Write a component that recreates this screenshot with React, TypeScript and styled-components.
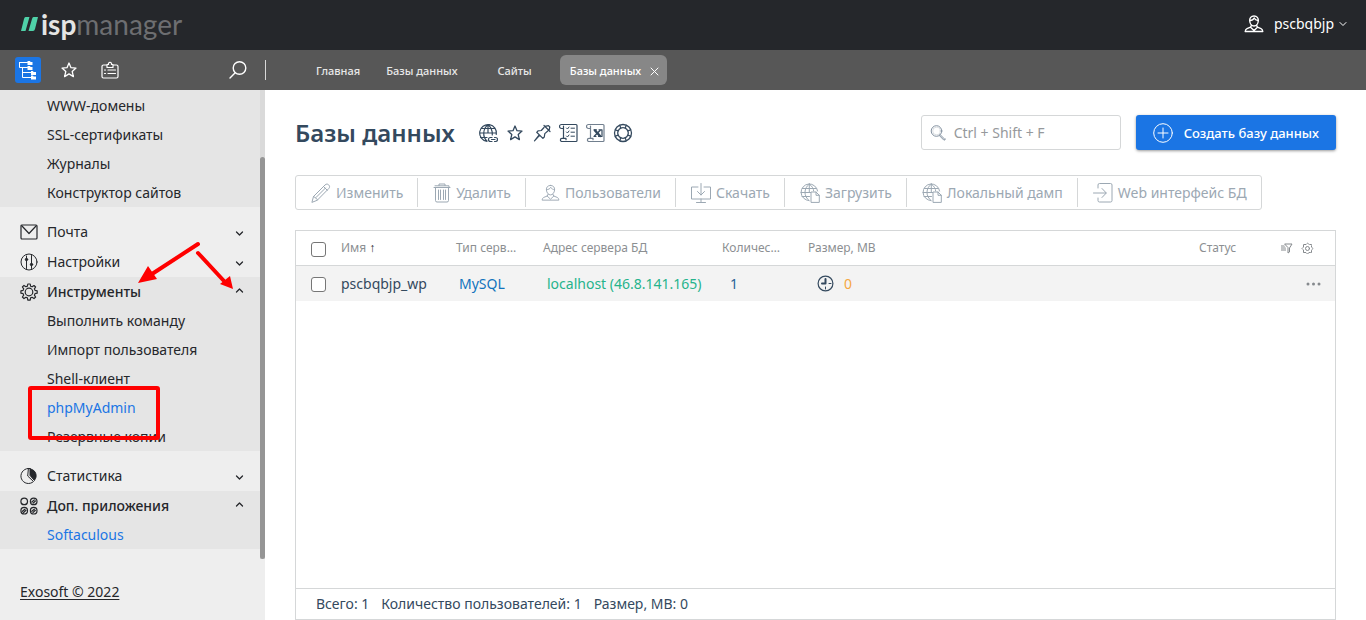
import React from "react";
import styled, { createGlobalStyle, css } from "styled-components";

const GlobalStyle = createGlobalStyle`
  *, *::before, *::after { box-sizing: border-box; }
  body {
    margin: 0;
    background: #ffffff;
    color: #25272b;
    font-family: "Noto Sans", "Open Sans", sans-serif;
    font-size: 14px;
    line-height: 20px;
  }
  button, input { font: inherit; }
  button { border: 0; padding: 0; background: none; color: inherit; cursor: pointer; }
  a { color: inherit; text-decoration: none; }
  svg { display: block; flex: none; }
`;

const Page = styled.div`
  position: relative;
  display: flex;
  flex-direction: column;
  min-height: 100vh;
`;

const TopBar = styled.header`
  display: flex;
  align-items: center;
  justify-content: space-between;
  height: 50px;
  padding: 0 19px 2px 21px;
  background: #25272b;
`;

const Logo = styled.a`
  display: flex;
  align-items: center;
  gap: 3px;
  font-family: Lato, sans-serif;
  font-size: 28px;
  line-height: 44px;
  color: #6d6e71;
  b { color: #e4e4e4; font-weight: 700; }
`;

const UserButton = styled.button`
  display: flex;
  align-items: center;
  color: #ffffff;
  svg:first-child { margin-right: 10px; }
  svg:last-child { margin-left: 5px; }
`;

const NavBar = styled.div`
  display: flex;
  align-items: center;
  height: 40px;
  background: #575757;
  color: #ffffff;
`;

const Modes = styled.div`
  display: flex;
  align-items: center;
  gap: 15px;
  width: 266px;
  height: 20px;
  padding: 0 14px 0 15px;
  border-right: 1px solid #d8d8d8;
  button:last-child { margin-left: auto; }
`;

const ModeButton = styled.button<{ $active?: boolean }>`
  display: grid;
  place-items: center;
  width: 26px;
  height: 26px;
  border-radius: 3px;
  background: ${(p) => (p.$active ? "#1b75e4" : "transparent")};
`;

const Tabs = styled.nav`
  display: flex;
  align-items: center;
  padding-left: 38px;
  font-size: 11px;
  font-weight: 500;
`;

const Tab = styled.a<{ $home?: boolean; $active?: boolean }>`
  display: flex;
  align-items: center;
  height: 30px;
  padding: 2px ${(p) => (p.$home ? 14 : 28)}px 0 12px;
  color: #e8e8e8;
  ${(p) =>
    p.$active &&
    css`
      gap: 9px;
      padding: 2px 8px 0 10px;
      border-radius: 6px;
      background: #878787;
      color: #ffffff;
    `}
`;

const Body = styled.div`
  display: flex;
  flex: 1;
`;

const Sidebar = styled.aside`
  display: flex;
  flex-direction: column;
  flex: none;
  width: 265px;
  background: #eeeeee;
`;

const MenuArea = styled.div`
  display: flex;
`;

const Menu = styled.nav`
  flex: 1;
  padding-bottom: 10px;
`;

const Rail = styled.div`
  display: flex;
  width: 5px;
  padding-top: 67px;
  background: #dadada;
`;

const Thumb = styled.div`
  flex: 1;
  border-radius: 3px;
  background: #959595;
`;

const Group = styled.section<{ $open?: boolean; $gap?: boolean }>`
  padding-top: ${(p) => (p.$gap ? 10 : 0)}px;
  background-clip: content-box;
  background-color: ${(p) => (p.$open ? "#e5e5e5" : "transparent")};
  &:first-child { padding-top: 1px; background-clip: border-box; }
`;

const GroupHead = styled.button<{ $open?: boolean }>`
  display: flex;
  align-items: center;
  width: 100%;
  height: ${(p) => (p.$open ? 29 : 30)}px;
  padding: 0 15px 0 20px;
  font-weight: ${(p) => (p.$open ? 500 : 400)};
  span { flex: 1; padding-left: 9px; text-align: left; }
`;

const SubList = styled.ul`
  margin: 0;
  padding: 0;
  list-style: none;
`;

const SubLink = styled.a<{ $blue?: boolean }>`
  display: block;
  padding-left: 47px;
  line-height: 29px;
  color: ${(p) => (p.$blue ? "#1b75e4" : "inherit")};
`;

const Copyright = styled.a`
  align-self: flex-start;
  margin: 23px 20px 18px;
  text-decoration: underline;
  text-underline-offset: 2px;
`;

const Main = styled.main`
  display: flex;
  flex: 1;
  flex-direction: column;
  min-width: 0;
  padding: 25px 30px 0;
  color: #34495e;
`;

const TitleRow = styled.div`
  display: flex;
  align-items: center;
  height: 35px;
`;

const Title = styled.h1`
  margin: 0;
  font-size: 24px;
  font-weight: 600;
  line-height: 35px;
`;

const TitleIcons = styled.div`
  display: flex;
  align-items: center;
  gap: 7px;
  margin-left: 23px;
`;

const SearchBox = styled.label`
  display: flex;
  align-items: center;
  gap: 8px;
  width: 200px;
  height: 35px;
  margin-left: auto;
  padding: 0 8px;
  border: 1px solid #d5d7d8;
  border-radius: 3px;
  color: #8391a0;
  input {
    flex: 1;
    min-width: 0;
    padding: 0;
    border: 0;
    outline: 0;
    background: none;
  }
  input::placeholder { color: #96999c; opacity: 1; }
`;

const CreateButton = styled.button`
  display: flex;
  align-items: center;
  gap: 11px;
  height: 35px;
  margin-left: 15px;
  padding: 0 17px;
  border-radius: 3px;
  background: #1b75e4;
  box-shadow: 0 1px 3px rgba(0, 0, 0, 0.4);
  color: #ffffff;
  font-size: 13px;
  font-weight: 500;
`;

const Toolbar = styled.div`
  display: flex;
  align-items: center;
  align-self: flex-start;
  height: 35px;
  margin-top: 25px;
  border: 1px solid #d5d7d8;
  border-radius: 3px;
`;

const ToolButton = styled.button`
  display: flex;
  align-items: center;
  gap: 5px;
  height: 29px;
  padding: 0 14px 0 15px;
  color: #9ca8b3;
  white-space: nowrap;
  & + & { border-left: 1px solid #d5d7d8; }
`;

const Panel = styled.section`
  display: flex;
  flex: 1;
  flex-direction: column;
  margin-top: 20px;
  border: 1px solid #d5d7d8;
`;

const PanelBody = styled.div`
  flex: 1;
`;

const Table = styled.table`
  width: 100%;
  table-layout: fixed;
  border-collapse: separate;
  border-spacing: 0;
  text-align: left;
  th, td { height: 35px; padding: 0; white-space: nowrap; }
  th {
    border-bottom: 1px solid #d5d7d8;
    color: #8c8f92;
    font-size: 12px;
    font-weight: 400;
  }
  td { background: #f3f3f3; }
`;

const Col = styled.col<{ $w?: number }>`
  width: ${(p) => (p.$w ? `${p.$w}px` : "auto")};
`;

const SortMark = styled.span`
  padding-left: 3px;
  color: #25272b;
`;

const Check = styled.input`
  display: block;
  appearance: none;
  width: 15px;
  height: 15px;
  margin: 2px 0 0 15px;
  border: 1px solid #767676;
  border-radius: 3px;
  background: #ffffff;
`;

const Value = styled.span<{ $indent?: number; $color?: string }>`
  display: flex;
  align-items: center;
  gap: 10px;
  padding-left: ${(p) => p.$indent ?? 0}px;
  color: ${(p) => p.$color ?? "inherit"};
`;

const EndCell = styled.div<{ $pad: number }>`
  display: flex;
  align-items: center;
  justify-content: flex-end;
  gap: 8px;
  padding-right: ${(p) => p.$pad}px;
  color: #85898d;
`;

const Totals = styled.footer`
  display: flex;
  align-items: center;
  gap: 12px;
  height: 31px;
  padding: 0 20px;
  border-top: 1px solid #d5d7d8;
`;

const Marks = styled.svg`
  position: absolute;
  top: 0;
  left: 0;
  pointer-events: none;
`;

type IconProps = { w?: number; h?: number; box?: string; sw?: number; children: React.ReactNode };
const Icon = ({ w = 20, h = w, box = `0 0 ${w} ${h}`, sw = 1, children }: IconProps) => (
  <svg width={w} height={h} viewBox={box} fill="none" stroke="currentColor" strokeWidth={sw} strokeLinecap="round" strokeLinejoin="round" aria-hidden="true">
    {children}
  </svg>
);

const Star = () => (
  <Icon box="-1 -1 20 20" sw={1.3}>
    <path d="M9 2 11 6.7 16 7.1 12.2 10.5 13.4 15.6 9 12.9 4.6 15.6 5.8 10.5 2 7.1 7 6.7Z" />
  </Icon>
);

const Person = ({ sw = 1 }: { sw?: number }) => (
  <Icon sw={sw}>
    <path d="M10 2C7 2 5.500 4 5.700 6.700 5.900 9.800 7.800 12 10 12s4.100-2.200 4.300-5.300C14.500 4 13 2 10 2Z" />
    <path d="M5.800 6.500C8 6.500 9.600 5.400 10.200 4c.7 1.500 2.300 2.300 4 2.500M7.500 11.300 6.500 13.200 3 14.600c-1 .4-1.600 1.300-1.800 2.900h17.600c-.2-1.600-.8-2.500-1.800-2.900l-3.500-1.400-1-1.900M6.500 13.200 10 16.500l3.500-3.300" />
  </Icon>
);

const GlobeFile = () => (
  <Icon>
    <path d="M9 17.6A8.300 8.300 0 1 1 17.600 8M2.300 5.500h14M1 9.500h10M2 13.500h7.500M9.300 1C3.500 5.500 3.500 13 9 17.500M9.300 1c3 2.300 4.200 4.700 4.400 7M9.300 1v8.500" />
    <path fill="#fff" d="M11 19V9h5l3.300 3.300V19ZM16 9v3.300h3.300" />
  </Icon>
);

const GlobeLink = () => (
  <Icon sw={1.2}>
    <path d="M9 18.300A8.400 8.400 0 1 1 18.300 11.500M3 5.500h14M1.600 10h16.800M2.500 14.500h6.500M10 1.600C4.500 6 4.500 14 9 18M10 1.600c3.500 3 4.600 6.500 4.300 10.400M10 1.600V10" />
    <path d="M14 14.500h-1.500a2 2 0 0 0 0 4H14M16.500 14.500H17.500a2 2 0 0 1 0 4H16.500M13.500 16.500h3.500" />
  </Icon>
);

const Pin = () => (
  <Icon sw={1.2}>
    <path d="m12 2.500 6 6M12.800 3.300l3.700-.6 1.300 1.300-.8 3.500M12 4.500 9.300 7.500 6 7.800 4.700 9.300l6.200 6.100 1.400-1.400.5-3.400 3-2.600M7.600 12.400 2.500 17.800M7.200 12 2.500 17.800" />
  </Icon>
);

const ScrollList = () => (
  <Icon sw={1.2}>
    <path d="M4.500 5.500h-2a1.800 1.800 0 0 1 0-4H17a1 1 0 0 1 1 1v15a1 1 0 0 1-1 1H3a1.500 1.500 0 0 1 0-3.200h4v1.400M4.500 3v12" />
    <path strokeWidth="1" d="m7.500 5 1 1 1.500-2M12 5.200h3.500M7.500 9l1 1L10 8M12 9.200h3.500M7.500 13l1 1 1.500-2M12 13.200h3.500" />
  </Icon>
);

const ScrollExcel = () => (
  <Icon sw={1.2}>
    <path opacity=".7" d="M4.500 5.500h-2a1.800 1.800 0 0 1 0-4H17a1 1 0 0 1 1 1v15a1 1 0 0 1-1 1H3a1.500 1.500 0 0 1 0-3.200h4v1.400M4.500 3v12" />
    <path strokeWidth="2.500" d="m9 7.500 5 5.500" />
    <path strokeWidth="1.500" d="m14 7.500-5.500 5.500" />
    <path d="M8 6.800h2.500M12.500 13.500H16V6.800h-3M8 13.500h2" />
  </Icon>
);

const LifeRing = () => (
  <Icon sw={1.3}>
    <circle cx="10" cy="10" r="8.500" />
    <circle cx="10" cy="10" r="5.300" />
    <path d="M6.800 2.400 7.800 5.300M2.400 6.800l2.900 1M13.200 2.400l-1 2.900M17.600 6.800l-2.900 1M6.800 17.600l1-2.900M2.400 13.200l2.900-1M13.200 17.600l-1-2.900M17.600 13.200l-2.900-1" />
  </Icon>
);

const Gear = ({ size = 17 }: { size?: number }) => (
  <Icon w={size} box="0 0 18 18" sw={1.2}>
    <path d="M7.800 1h2.400l.4 2.200 1.500.6 1.900-1.300L15.600 4l-1.200 1.900.6 1.500 2.200.4v2.400l-2.200.4-.6 1.500 1.200 1.900-1.600 1.600-1.900-1.300-1.500.6-.4 2.200H7.800l-.4-2.200-1.500-.6L4 15.600 2.400 14l1.300-1.900-.6-1.500-2.200-.4V7.800l2.200-.4.6-1.500L2.400 4 4 2.400l1.900 1.300 1.500-.6Z" />
    <circle cx="9" cy="9" r="3.800" />
  </Icon>
);

const TinyGear = () => (
  <Icon w={13}>
    <path d="M6.500 1 8 2.500h2.500V5L12 6.500 10.500 8v2.500H8L6.500 12 5 10.500H2.500V8L1 6.500 2.500 5V2.500H5Z" strokeDasharray="2 1" />
    <circle cx="6.500" cy="6.500" r="2" />
  </Icon>
);

const Chevron = ({ up }: { up?: boolean }) => (
  <Icon w={11} h={10} sw={1.3}><path d={up ? "M2.500 5 5.500 2l3 3" : "m2.500 5 3 3 3-3"} /></Icon>
);

const groupIcons: Record<string, React.ReactNode> = {
  mail: <Icon w={18} sw={1.2}><rect x="1" y="2" width="16" height="14" rx="1" /><path d="m2 3 7 7.500L16 3" /></Icon>,
  settings: (
    <Icon w={18}>
      <circle cx="9" cy="9" r="8" />
      <path d="M6.500 3v12.500M11.500 2.500v13" />
      <circle cx="6.500" cy="6.500" r="1.200" fill="currentColor" />
      <circle cx="11.500" cy="11.500" r="1.200" fill="currentColor" />
    </Icon>
  ),
  tools: <Gear size={18} />,
  stats: (
    <Icon w={18}>
      <path d="M8 1.500a7.500 7.500 0 1 0 5.500 13L8 9.300Z" />
      <path d="M8 1.500h2V8.500l4.500 5" />
      <path fill="currentColor" d="M10.500 2V8.300l4 4.700C17.500 10 16.500 3 10.500 2Z" />
    </Icon>
  ),
  apps: (
    <Icon w={18} sw={1.2}>
      <circle cx="4.200" cy="4.400" r="3.300" /><circle cx="13.700" cy="4.400" r="3.300" />
      <circle cx="4.200" cy="13.700" r="3.300" /><circle cx="13.700" cy="13.700" r="3.300" />
      <path d="m11.800 5 2.500-2.100M13 6.200 15.400 4M2.400 14.300l2.500-2.100M3.600 15.500 6 13.300M11.800 14.300l2.500-2.100M13 15.500l2.400-2.200" />
    </Icon>
  ),
};

type GroupData = { icon?: string; label?: string; open?: boolean; gap?: boolean; items?: { label: string; blue?: boolean }[] };
const groups: GroupData[] = [
  { open: true, items: [{ label: "WWW-домены" }, { label: "SSL-сертификаты" }, { label: "Журналы" }, { label: "Конструктор сайтов" }] },
  { icon: "mail", label: "Почта", gap: true },
  { icon: "settings", label: "Настройки" },
  {
    icon: "tools", label: "Инструменты", open: true,
    items: [{ label: "Выполнить команду" }, { label: "Импорт пользователя" }, { label: "Shell-клиент" }, { label: "phpMyAdmin", blue: true }, { label: "Резервные копии" }],
  },
  { icon: "stats", label: "Статистика", gap: true },
  { icon: "apps", label: "Доп. приложения", open: true, items: [{ label: "Softaculous", blue: true }] },
];

const tools: { label: string; icon: React.ReactNode }[] = [
  { label: "Изменить", icon: <Icon><path d="m1 19 1.500-5.500L14 2c1.300-1.200 2.500-1.200 3.600-.2 1.200 1.200 1.300 2.500.2 3.700L6.500 17Zm1.500-5.500c1 0 1.300.5 1.300 1.200 1 0 1.300.5 1.400 1.100.8 0 1.200.5 1.300 1.200M5 14.500 14.500 5M12.500 3.500l3.800 3.800" /></Icon> },
  { label: "Удалить", icon: <Icon w={18} h={20}><path d="M1 4.500h16M2 2.800h14v1.700M6 2.500V1h6v1.500M2.500 4.500v13a1.500 1.500 0 0 0 1.500 1.500h10a1.500 1.500 0 0 0 1.500-1.500v-13M5.500 7v9.500M7.500 7v9.500M10.500 7v9.500M12.500 7v9.500" /></Icon> },
  { label: "Пользователи", icon: <Icon w={19} h={20} box="0 0 20 20"><path d="M10 2C7 2 5.500 4 5.700 6.700 5.900 9.800 7.800 12 10 12s4.100-2.200 4.300-5.300C14.500 4 13 2 10 2ZM5.800 6.500C8 6.500 9.600 5.400 10.200 4c.7 1.500 2.300 2.300 4 2.500M7.500 11.300 6.500 13.200 3 14.600c-1 .4-1.600 1.300-1.800 2.900h17.600c-.2-1.600-.8-2.500-1.800-2.900l-3.500-1.400-1-1.900M6.500 13.200 10 16.500l3.500-3.300" /></Icon> },
  { label: "Скачать", icon: <Icon><path d="M7 4H.500v12h19V4H13M10 .500V12M6.500 8.500 10 12l3.500-3.500M10 16v3M5.500 19.500h9" /></Icon> },
  { label: "Загрузить", icon: <GlobeFile /> },
  { label: "Локальный дамп", icon: <GlobeFile /> },
  { label: "Web интерфейс БД", icon: <Icon><path d="M5 5V2A1.500 1.500 0 0 1 6.500 .500h11A1.500 1.500 0 0 1 19 2v15.500a1.500 1.500 0 0 1-1.500 1.500h-11A1.500 1.500 0 0 1 5 17.500V15M.500 10H13M9 5.500 13.300 10 9 14.500" /></Icon> },
];

const App = () => (
  <>
    <GlobalStyle />
    <Page>
      <TopBar>
        <Logo href="#">
          <svg width="17" height="14" viewBox="0 0 17 14" fill="#4fd1a8" aria-hidden="true">
            <path d="M4.500 0H8.500L4.500 14H0L3 2Q3.500 0 4.500 0ZM12.500 0H17L14 12Q13.500 14 12 14H7.500L11 2Q11.500 0 12.500 0Z" />
          </svg>
          <span><b>isp</b>manager</span>
        </Logo>
        <UserButton>
          <Person sw={1.4} />
          pscbqbjp
          <Icon w={8} h={8}><path d="m1 2.500 3 3 3-3" /></Icon>
        </UserButton>
      </TopBar>

      <NavBar>
        <Modes>
          <ModeButton $active aria-label="Меню">
            <Icon>
              <path d="M1.500 2.500h8M1.500 2.500v5h8M4.500 7.500v10H13M4.500 12.500H13" />
              <g fill="currentColor" stroke="none">
                <path d="M9.500 1h2.500l.5 1H14.500v3h-5ZM9.500 6h2.500l.5 1H14.500v3h-5ZM13 11h2l.5 1H18v3h-5ZM13 15.500h2l.5 1H18v3h-5Z" />
              </g>
            </Icon>
          </ModeButton>
          <ModeButton aria-label="Избранное"><Star /></ModeButton>
          <ModeButton aria-label="Карточка">
            <Icon w={18} sw={1.2}>
              <path d="M6 4H2.500A1.500 1.500 0 0 0 1 5.500v10A1.500 1.500 0 0 0 2.500 17h13a1.500 1.500 0 0 0 1.500-1.500v-10A1.500 1.500 0 0 0 15.500 4H12M6 6.500V3.500h1.500a1.600 1.600 0 1 1 3 0H12v3ZM3.500 9h1M3.500 12.500h1M7 9h7.500M7 12.500h7.500" />
            </Icon>
          </ModeButton>
          <ModeButton aria-label="Поиск">
            <Icon sw={1.4}><circle cx="11.500" cy="8" r="6.300" /><path d="M7.200 12.700 2 18" /></Icon>
          </ModeButton>
        </Modes>
        <Tabs>
          <Tab href="#" $home>Главная</Tab>
          <Tab href="#">Базы данных</Tab>
          <Tab href="#">Сайты</Tab>
          <Tab href="#" $active>
            Базы данных
            <Icon w={9}><path d="m1 1 7 7M8 1 1 8" /></Icon>
          </Tab>
        </Tabs>
      </NavBar>

      <Body>
        <Sidebar>
          <MenuArea>
            <Menu>
              {groups.map((g, i) => (
                <Group key={i} $open={g.open} $gap={g.gap}>
                  {g.label && (
                    <GroupHead $open={g.open} aria-expanded={!!g.open}>
                      {groupIcons[g.icon!]}
                      <span>{g.label}</span>
                      <Chevron up={g.open} />
                    </GroupHead>
                  )}
                  {g.items && (
                    <SubList>
                      {g.items.map((it) => (
                        <li key={it.label}><SubLink href="#" $blue={it.blue}>{it.label}</SubLink></li>
                      ))}
                    </SubList>
                  )}
                </Group>
              ))}
            </Menu>
            <Rail><Thumb /></Rail>
          </MenuArea>
          <Copyright href="#">Exosoft © 2022</Copyright>
        </Sidebar>

        <Main>
          <TitleRow>
            <Title>Базы данных</Title>
            <TitleIcons>
              <GlobeLink /><Star /><Pin /><ScrollList /><ScrollExcel /><LifeRing />
            </TitleIcons>
            <SearchBox>
              <Icon w={16}><circle cx="6.500" cy="6" r="5.300" /><circle cx="6.500" cy="6" r="3.800" opacity=".3" /><path d="m10 9.500 5 5M9.300 10.500l4.700 4.800 1.300-1.200" /></Icon>
              <input type="text" placeholder="Ctrl + Shift + F" aria-label="Поиск" />
            </SearchBox>
            <CreateButton>
              <Icon><circle cx="10" cy="10" r="9.300" /><path d="M10 5v10M5 10h10" /></Icon>
              Создать базу данных
            </CreateButton>
          </TitleRow>

          <Toolbar>
            {tools.map((t) => <ToolButton key={t.label}>{t.icon}{t.label}</ToolButton>)}
          </Toolbar>

          <Panel>
            <PanelBody>
              <Table>
                <colgroup>
                  <Col $w={45} /><Col $w={115} /><Col $w={87} /><Col $w={179} /><Col $w={86} /><Col /><Col $w={60} /><Col $w={76} />
                </colgroup>
                <thead>
                  <tr>
                    <th><Check type="checkbox" aria-label="Выбрать все" /></th>
                    <th>Имя<SortMark>↑</SortMark></th>
                    <th>Тип серв…</th>
                    <th>Адрес сервера БД</th>
                    <th>Количес…</th>
                    <th>Размер, МВ</th>
                    <th>Статус</th>
                    <th>
                      <EndCell $pad={21}>
                        <Icon w={13} h={11}><path d="M5 1h7L9.500 5v4L8 10V5Z" /><path fill="currentColor" stroke="none" opacity=".5" d="M1 2h3l2 3v3H1Z" /></Icon>
                        <TinyGear />
                      </EndCell>
                    </th>
                  </tr>
                </thead>
                <tbody>
                  <tr>
                    <td><Check type="checkbox" aria-label="pscbqbjp_wp" /></td>
                    <td>pscbqbjp_wp</td>
                    <td><Value $indent={3} $color="#1273bd">MySQL</Value></td>
                    <td><Value $indent={4} $color="#26b38c">localhost (46.8.141.165)</Value></td>
                    <td><Value $indent={8} $color="#2a5f96">1</Value></td>
                    <td>
                      <Value $indent={9}>
                        <Icon w={17} sw={1.2}><circle cx="8.500" cy="8.500" r="7.400" /><path strokeWidth="2" d="M8.500 4v4.500H5" /><path strokeWidth="1" d="M12 8.500h2M8.500 12v2" /></Icon>
                        <Value $color="#f5a742">0</Value>
                      </Value>
                    </td>
                    <td />
                    <td>
                      <EndCell $pad={14}>
                        <Icon w={15} h={4}><g fill="currentColor" stroke="none"><circle cx="2" cy="2" r="1.500" /><circle cx="7.500" cy="2" r="1.500" /><circle cx="13" cy="2" r="1.500" /></g></Icon>
                      </EndCell>
                    </td>
                  </tr>
                </tbody>
              </Table>
            </PanelBody>
            <Totals>
              <span>Всего: 1</span>
              <span>Количество пользователей: 1</span>
              <span>Размер, МВ: 0</span>
            </Totals>
          </Panel>
        </Main>
      </Body>

      <Marks width="265" height="450" viewBox="0 0 265 450" fill="none" stroke="#ff0000" strokeWidth="4" strokeLinecap="round" aria-hidden="true">
        <path d="M198 244 152 274M198 253 224 281" />
        <path fill="#ff0000" stroke="none" d="M138 283 148 266 157 279ZM233 289 220 284 230 276Z" />
        <rect x="30" y="388" width="128" height="50" rx="1" />
      </Marks>
    </Page>
  </>
);

export default App;
